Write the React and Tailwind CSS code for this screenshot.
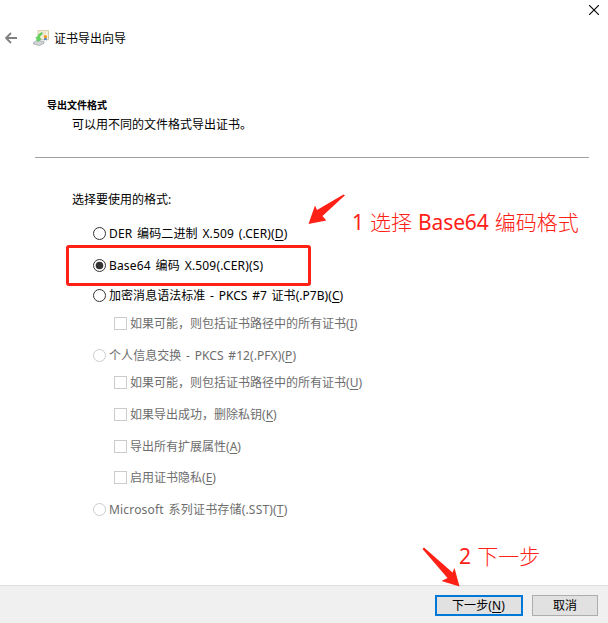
const latin = 'font-["Noto_Sans","Noto_Sans_CJK_SC",sans-serif]';

function Key({ k }) {
  return (
    <>
      (<span className="underline decoration-1 underline-offset-2">{k}</span>)
    </>
  );
}

function Radio({ checked, disabled }) {
  return (
    <svg width="13" height="13" viewBox="0 0 13 13" className="shrink-0">
      <circle cx="6.5" cy="6.5" r="6" fill="#fff" stroke={disabled ? "#ccc" : "#333"} />
      {checked && <circle cx="6.5" cy="6.5" r="3.8" fill="#333" />}
    </svg>
  );
}

function Option({ type, checked, disabled, className = "", children }) {
  return (
    <div
      className={`flex h-[17px] items-center gap-[3px] leading-[17px] whitespace-pre [word-spacing:1.5px] ${type === "check" ? "ml-[21px]" : ""} ${disabled ? "text-[#6d6d6d]" : "text-black"} ${className}`}
    >
      {type === "check" ? (
        <span className="size-[13px] shrink-0 border border-[#ccc] bg-white" />
      ) : (
        <Radio checked={checked} disabled={disabled} />
      )}
      <span>{children}</span>
    </div>
  );
}

export default function App() {
  return (
    <div className={`relative flex h-[623px] w-[608px] flex-col overflow-hidden bg-white text-[12px] text-black ${latin}`}>
      <div className="flex h-[20px] justify-end pt-[5px] pr-[9px]">
        <svg width="10" height="10" viewBox="0 0 10 10">
          <path d="M0 0l10 10M10 0L0 10" stroke="#000" strokeWidth="1.1" />
        </svg>
      </div>
      <header className="flex h-[36px] items-center pl-[5px]">
        <svg width="12" height="12" viewBox="0 0 12 12" className="mr-[16px]">
          <path d="M12 6H1.2M6 1L1 6l5 5" fill="none" stroke="#808080" strokeWidth="1.8" />
        </svg>
        <svg width="16" height="16" viewBox="0 0 16 16" className="mr-[5px]">
          <path d="M5 .7h10.500v9H5z" fill="#f7f1df" stroke="#c9b98d" strokeWidth=".8" />
          <path d="M7 3h6M7 5h4" stroke="#d8d2c0" strokeWidth=".8" />
          <path d="M11.200 7.500v3l1.200-.7 1.200.7v-3z" fill="#2f74e8" />
          <circle cx="12.400" cy="6.800" r="1.700" fill="#f09a1c" />
          <path d="M.5 12.500l4-2.400 6.500 1.600v1.600l-4.500 2.300-6-1.600z" fill="#d2d5d8" stroke="#8c9296" strokeWidth=".6" />
          <path d="M9 2.500C6.500 3.200 4.800 5 4.600 7.500L2.800 7.200l2 4.500 3.500-3.100-1.700-.4c.1-1.800.9-3.200 2.700-4.100z" fill="#5fd85a" stroke="#3cb03a" strokeWidth=".4" />
        </svg>
        <h1 className="pt-[2px] leading-4">证书导出向导</h1>
      </header>
      <section className="mr-[19px] ml-[35px] flex h-[102px] flex-col border-b border-[#a0a0a0] pt-[41px]">
        <h2 className="pl-[12px] text-[10px] leading-4 font-bold">导出文件格式</h2>
        <p className="mt-[4px] pl-[37px] leading-4">可以用不同的文件格式导出证书。</p>
      </section>
      <main className="flex flex-1 flex-col pt-[34px] pl-[72px]">
        <p className="mb-[17px] leading-4">选择要使用的格式:</p>
        <div className="flex flex-col pl-[21px]">
          <Option className="tracking-[0.13px]">DER 编码二进制 X.509 (.CER)<Key k="D" /></Option>
          <Option checked className="mt-[15px] tracking-[0.17px]">Base64 编码 X.509(.CER)(S)</Option>
          <Option className="mt-[13px] tracking-[0.05px]">加密消息语法标准 - PKCS #7 证书(.P7B)<Key k="C" /></Option>
          <Option type="check" disabled className="mt-[11px]">如果可能，则包括证书路径中的所有证书<Key k="I" /></Option>
          <Option disabled className="mt-[15px] tracking-[0.07px]">个人信息交换 - PKCS #12(.PFX)<Key k="P" /></Option>
          <Option type="check" disabled className="mt-[10px]">如果可能，则包括证书路径中的所有证书<Key k="U" /></Option>
          <Option type="check" disabled className="mt-[15px]">如果导出成功，删除私钥<Key k="K" /></Option>
          <Option type="check" disabled className="mt-[15px]">导出所有扩展属性<Key k="A" /></Option>
          <Option type="check" disabled className="mt-[14px]">启用证书隐私<Key k="E" /></Option>
          <Option disabled className="mt-[15px] tracking-[0.18px]">Microsoft 系列证书存储(.SST)<Key k="T" /></Option>
        </div>
      </main>
      <footer className="flex h-[38px] items-start justify-end gap-[9px] border-t border-[#dfdfdf] bg-[#f0f0f0] pt-[9px] pr-[10px]">
        <button className="h-[21px] w-[88px] border-2 border-[#0078d7] bg-[#e1e1e1] pr-px leading-[17px] tracking-[0.1px]">
          下一步<Key k="N" />
        </button>
        <button className="h-[21px] w-[66px] border border-[#adadad] bg-[#e1e1e1] leading-[19px]">取消</button>
      </footer>

      <div className="absolute top-[245px] left-[66px] h-[41px] w-[245px] rounded-[3px] border-3 border-[#ff2116]" />
      <svg className="absolute top-[190px] left-[305px]" width="42" height="36" viewBox="305 190 42 36">
        <path d="M308.500 224L315 205.500l2 4.500L343.500 194.500l1.500.8L322.500 216l3.800 4.500z" fill="#ff2116" />
      </svg>
      <p className="absolute top-[208px] left-[352px] text-[21px] leading-7 font-light whitespace-nowrap text-[#ff2116] [word-spacing:0.5px]">
        <span className="font-normal">1</span> 选择 <span className="font-normal tracking-[-0.1px]">Base64</span> 编码格式
      </p>
      <svg className="absolute top-[544px] left-[420px]" width="44" height="46" viewBox="420 544 44 46">
        <path d="M422.500 549l1.500-1.500 28.500 25 2-4.500 5 18.500-18-5.500 6-3z" fill="#ff2116" />
      </svg>
      <p className="absolute top-[542px] left-[459px] text-[21px] leading-7 font-light whitespace-nowrap text-[#ff2116] [word-spacing:0.7px]">
        <span className="font-normal">2</span> 下一步
      </p>
    </div>
  );
}
